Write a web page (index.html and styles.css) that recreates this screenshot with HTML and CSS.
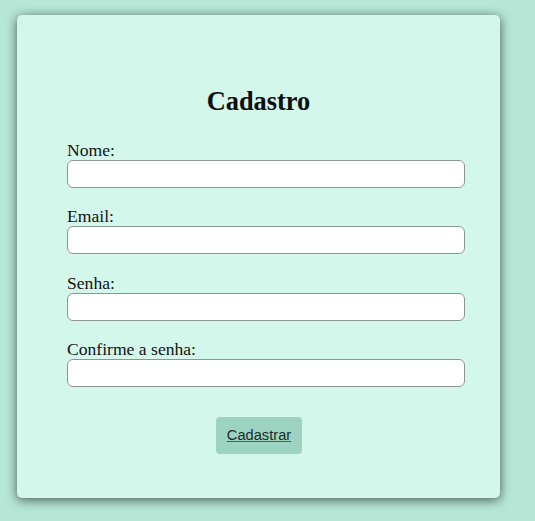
FILE: index.html
```html
<!DOCTYPE html>
<html lang="pt-BR">
<head>
<meta charset="utf-8">
<title>Cadastro</title>
<link rel="stylesheet" href="styles.css">
</head>
<body>
<div class="card">
  <h2 class="title">Cadastro</h2>
  <form class="form">
    <div class="field">
      <label class="label" for="nome">Nome:</label>
      <input class="input" id="nome" type="text">
    </div>
    <div class="field">
      <label class="label" for="email">Email:</label>
      <input class="input" id="email" type="email">
    </div>
    <div class="field">
      <label class="label" for="senha">Senha:</label>
      <input class="input" id="senha" type="password">
    </div>
    <div class="field">
      <label class="label" for="conf">Confirme a senha:</label>
      <input class="input" id="conf" type="password">
    </div>
    <div class="actions">
      <button class="btn" type="button"><span class="btn-link">Cadastrar</span></button>
    </div>
  </form>
</div>
</body>
</html>
```
FILE: styles.css
```css
html, body {
  margin: 0;
  padding: 0;
}
body {
  background: #b6e6d6;
  font-family: "Liberation Serif", "Times New Roman", serif;
  font-size: 17.6px;
  color: #111;
  padding: 15px 0 0 17px;
  height: 521px;
  box-sizing: border-box;
  overflow: hidden;
}
.card {
  width: 483px;
  height: 483px;
  box-sizing: border-box;
  background: #d4f7ec;
  border-radius: 5px;
  box-shadow: 0 2px 11px rgba(0, 0, 0, 0.62);
  padding: 71px 0 0 50px;
}
.title {
  margin: 0 0 24px 0;
  padding-right: 50px;
  text-align: center;
  font-size: 26.4px;
  font-weight: bold;
  line-height: 30px;
  color: #0d0d0d;
}
.form {
  display: flex;
  flex-direction: column;
}
.field {
  display: flex;
  flex-direction: column;
  align-items: flex-start;
  margin-bottom: 18.4px;
}
.label {
  line-height: 20px;
  height: 20px;
  color: #111;
}
.input {
  width: 398px;
  height: 28px;
  box-sizing: border-box;
  margin: 0;
  border: 1px solid #8e9692;
  border-radius: 6px;
  background: #fff;
  font-size: 14px;
}
.actions {
  display: flex;
  width: 398px;
  justify-content: center;
  margin-top: 11px;
  box-sizing: border-box;
  padding-right: 14px;
}
.btn {
  width: 86px;
  height: 37px;
  border: none;
  border-radius: 4px;
  background: #9cd4c1;
  font-family: "Liberation Sans", Arial, sans-serif;
  font-size: 14.67px;
  color: #1b2b2b;
  padding: 0;
  cursor: pointer;
}
.btn-link {
  text-decoration: underline;
  text-decoration-color: #2a55d6;
}
```
